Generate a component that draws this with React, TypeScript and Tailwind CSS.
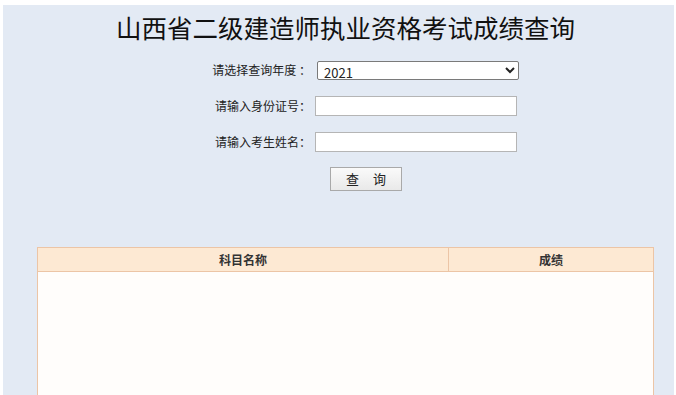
const font = { fontFamily: '"Noto Sans CJK SC", "Microsoft YaHei", sans-serif' };

function FormRow({ label, children }: { label: string; children: React.ReactNode }) {
  return (
    <div className="flex items-center h-[20px]">
      <label className="w-[112px] text-right text-[12px] text-[#222] pr-[4px]">{label}</label>
      {children}
    </div>
  );
}

export default function App() {
  return (
    <div className="w-[676px] h-[395px] bg-white pt-[5px] pl-[3px] pr-[2px] overflow-hidden" style={font}>
      <div className="h-full bg-[#e3eaf4] flex flex-col">
        <h1 className="mt-[9px] pl-[14px] text-center text-[25.5px] leading-[26px] text-[#111] font-normal">
          山西省二级建造师执业资格考试成绩查询
        </h1>

        <div className="ml-[200px] mt-[20px] flex flex-col gap-[16px]">
          <FormRow label="请选择查询年度 ：">
            <select className="ml-[2px] w-[202px] h-[19px] bg-white border border-[#7a7a7a] rounded-[2px] text-[13px] text-[#222] px-[2px] leading-[17px]">
              <option>2021</option>
            </select>
          </FormRow>
          <FormRow label="请输入身份证号：">
            <input className="w-[202px] h-[20px] bg-white border border-[#b5b5b5]" />
          </FormRow>
          <FormRow label="请输入考生姓名：">
            <input className="w-[202px] h-[20px] bg-white border border-[#b5b5b5]" />
          </FormRow>
          <div className="pl-[127px] -mt-[3px]">
            <button className="w-[72px] h-[24px] whitespace-nowrap bg-gradient-to-b from-[#fafafa] to-[#e9e9e9] border border-[#a9a9a9] text-[13px] leading-[22px] text-[#222] tracking-[14px] pl-[14px]">
              查询
            </button>
          </div>
        </div>

        <div className="mt-[56px] ml-[34px] w-[617px] flex-1 border border-[#ecc5a6] border-b-0 bg-[#fffdfb]">
          <div className="flex h-[24px] bg-[#fde9d3] border-b border-[#ecc5a6] text-[12px] font-bold text-[#333]">
            <div className="w-[411px] flex items-center justify-center border-r border-[#ecc5a6]">科目名称</div>
            <div className="flex-1 flex items-center justify-center">成绩</div>
          </div>
        </div>
      </div>
    </div>
  );
}
